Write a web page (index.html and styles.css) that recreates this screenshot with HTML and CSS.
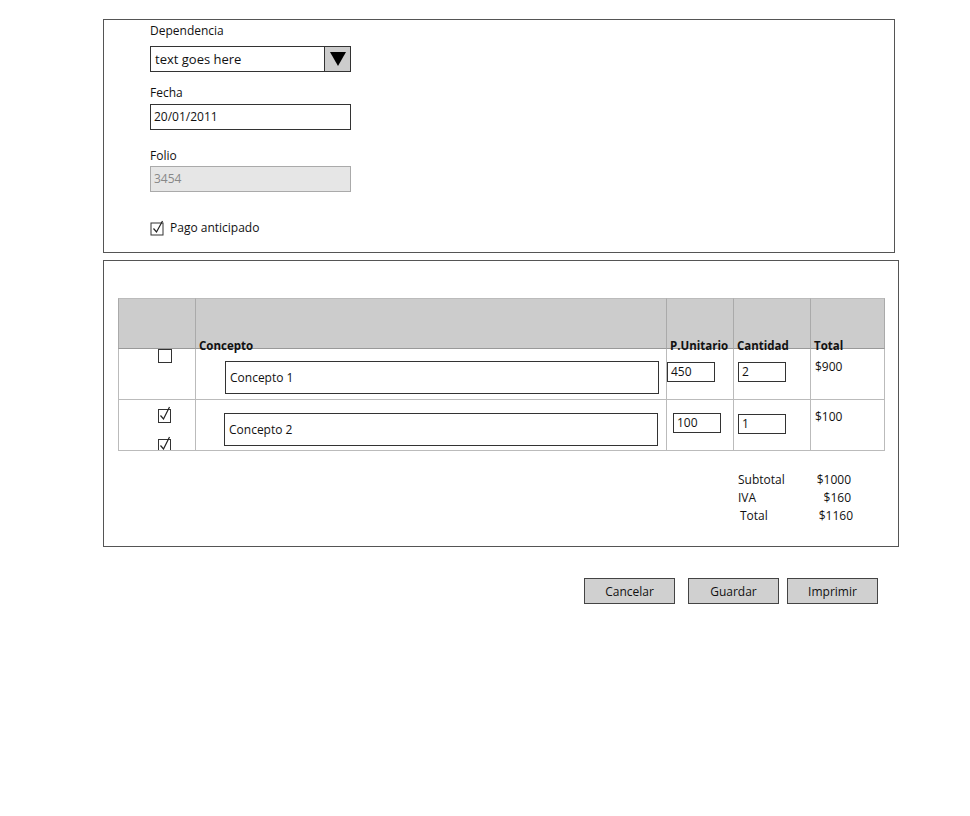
FILE: index.html
```html
<!DOCTYPE html>
<html lang="es">
<head>
  <meta charset="UTF-8" />
  <title>Factura</title>
  <link rel="stylesheet" href="styles.css">
</head>
<body>

  <div class="panel datos">
    <div class="label first">Dependencia</div>
    <div class="combo">
      <span class="combo-text">text goes here</span>
      <span class="combo-btn"><svg width="16" height="14" viewBox="0 0 16 14"><path d="M0 0 L16 0 L8 14 Z" fill="#000"/></svg></span>
    </div>
    <div class="label fecha">Fecha</div>
    <div class="field">20/01/2011</div>
    <div class="label folio">Folio</div>
    <div class="field disabled">3454</div>
    <div class="check-row">
      <svg class="check" width="16" height="16" viewBox="0 0 16 16"><rect x="1" y="3" width="12" height="12" fill="#fff" stroke="#333"/><path d="M3.5 8.5 L6.5 12 L12.5 1" fill="none" stroke="#222" stroke-width="1.2"/></svg>
      <span>Pago anticipado</span>
    </div>
  </div>

  <div class="panel detalle">
    <div class="grid">
      <div class="head"></div>
      <div class="head"><span>Concepto</span></div>
      <div class="head"><span>P.Unitario</span></div>
      <div class="head"><span>Cantidad</span></div>
      <div class="head last"><span>Total</span></div>

      <div class="cell sel r1"><svg width="16" height="16" viewBox="0 0 16 16"><rect x="1.5" y="0.5" width="13" height="13" fill="#fff" stroke="#333"/></svg></div>
      <div class="cell"><div class="box concepto r1a">Concepto 1</div></div>
      <div class="cell"><div class="box small r1b">450</div></div>
      <div class="cell"><div class="box small r1c">2</div></div>
      <div class="cell last"><div class="money r1d">$900</div></div>

      <div class="cell sel r2">
        <svg width="16" height="17" viewBox="0 0 16 17"><rect x="1.5" y="3.5" width="12" height="13" fill="#fff" stroke="#333"/><path d="M3.5 9.5 L6.5 13 L12.5 1" fill="none" stroke="#222" stroke-width="1.2"/></svg>
        <svg width="16" height="17" viewBox="0 0 16 17"><rect x="1.5" y="3.5" width="12" height="13" fill="#fff" stroke="#333"/><path d="M3.5 9.5 L6.5 13 L12.5 1" fill="none" stroke="#222" stroke-width="1.2"/></svg>
      </div>
      <div class="cell"><div class="box concepto r2a">Concepto 2</div></div>
      <div class="cell"><div class="box small r2b">100</div></div>
      <div class="cell"><div class="box small r2c">1</div></div>
      <div class="cell last"><div class="money r2d">$100</div></div>
    </div>

    <div class="totals">
      <span>Subtotal</span><span class="val">$1000</span>
      <span>IVA</span><span class="val">$160</span>
      <span class="tot">Total</span><span class="val wide">$1160</span>
    </div>
  </div>

  <div class="actions">
    <button class="cancel">Cancelar</button>
    <button class="save">Guardar</button>
    <button class="print">Imprimir</button>
  </div>

</body>
</html>
```

FILE: styles.css
```css
body {
  margin: 0;
  font-family: 'Open Sans', sans-serif;
  font-size: 12px;
  color: #111;
  background: #fff;
}

.panel {
  box-sizing: border-box;
  border: 1px solid #555;
  margin-left: 103px;
}

.datos {
  margin-top: 19px;
  width: 792px;
  height: 234px;
  padding-left: 46px;
}

.label {
  line-height: 16px;
}

.label.first { margin-top: 3px; }
.label.fecha { margin-top: 13px; }
.label.folio { margin-top: 18px; }

.combo {
  box-sizing: border-box;
  width: 201px;
  height: 26px;
  margin-top: 7px;
  border: 1px solid #333;
  display: flex;
}

.combo-text {
  flex: 1;
  padding-left: 4px;
  line-height: 24px;
  font-size: 13px;
}

.combo-btn {
  width: 25px;
  background: #ccc;
  border-left: 1px solid #333;
  display: flex;
  align-items: center;
  justify-content: center;
}

.field {
  box-sizing: border-box;
  width: 201px;
  height: 26px;
  margin-top: 3px;
  border: 1px solid #333;
  padding-left: 3px;
  line-height: 24px;
}

.field.disabled {
  margin-top: 2px;
  background: #e6e6e6;
  border-color: #aaa;
  color: #888;
}

.check-row {
  margin-top: 28px;
  display: flex;
  align-items: center;
  gap: 4px;
  line-height: 16px;
}

.detalle {
  margin-top: 7px;
  width: 796px;
  height: 287px;
  padding: 37px 0 0 14px;
}

.grid {
  display: grid;
  grid-template-columns: 77px 471px 67px 77px 75px;
  grid-template-rows: 51px 51px 51px;
  width: 767px;
}

.head {
  box-sizing: border-box;
  background: #ccc;
  border-left: 1px solid #aaa;
  border-top: 1px solid #bbb;
  border-bottom: 1px solid #999;
  font-weight: bold;
}

.head.last { border-right: 1px solid #aaa; }

.head span {
  display: block;
  padding: 40px 0 0 3px;
  line-height: 14px;
  font-size: 11.5px;
  white-space: nowrap;
}

.cell {
  box-sizing: border-box;
  border-left: 1px solid #bbb;
  border-bottom: 1px solid #bbb;
  overflow: hidden;
}

.cell.last { border-right: 1px solid #bbb; }

.sel {
  padding-left: 38px;
  display: flex;
  flex-direction: column;
  gap: 13px;
}

.sel.r1 { padding-top: 0; }
.sel.r2 { padding-top: 6px; }

.sel svg { flex-shrink: 0; }

.box {
  box-sizing: border-box;
  border: 1px solid #333;
  background: #fff;
  padding-left: 3px;
}

.concepto {
  width: 434px;
  height: 33px;
  line-height: 31px;
  padding-left: 4px;
}

.small {
  width: 48px;
  height: 20px;
  line-height: 17px;
}

.r1a { margin: 12px 0 0 29px; }
.r1b { margin: 13px 0 0 0; }
.r1c { margin: 13px 0 0 4px; }
.r1d { margin: 10px 0 0 4px; }
.r2a { margin: 13px 0 0 28px; }
.r2b { margin: 13px 0 0 6px; }
.r2c { margin: 14px 0 0 4px; }
.r2d { margin: 9px 0 0 4px; }

.money {
  line-height: 16px;
}

.totals {
  display: grid;
  grid-template-columns: 77px 36px;
  margin: 20px 0 0 620px;
  line-height: 18px;
}

.totals .val { text-align: right; }
.totals .wide { margin-right: -2px; }
.totals .tot { padding-left: 2px; }

.actions {
  display: flex;
  margin: 31px 0 0 584px;
}

.actions button {
  box-sizing: border-box;
  width: 91px;
  height: 26px;
  background: #d0d0d0;
  border: 1px solid #444;
  font-family: 'Open Sans', sans-serif;
  font-size: 12px;
  color: #111;
  padding: 0;
}

.actions .save { margin-left: 13px; }
.actions .print { margin-left: 8px; }
```
